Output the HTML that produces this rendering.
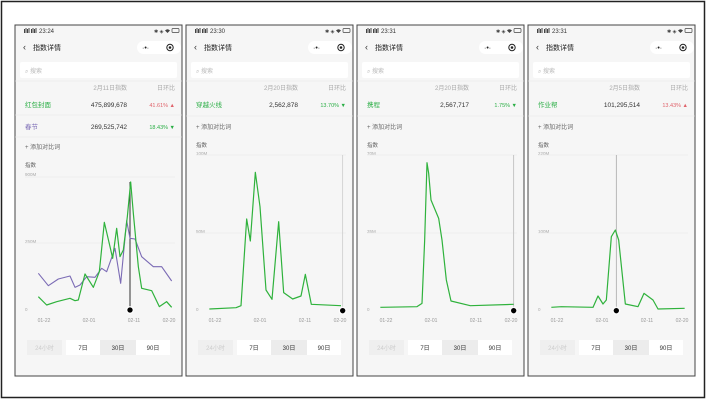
<!DOCTYPE html>
<html><head><meta charset="utf-8"><style>
html,body{margin:0;padding:0;background:#fff;width:706px;height:400px;overflow:hidden}
svg{display:block}
text{font-family:"Liberation Sans","Noto Sans CJK SC",sans-serif}
</style></head><body>
<svg width="706" height="400" viewBox="0 0 706 400" xmlns="http://www.w3.org/2000/svg">
<rect x="1.5" y="1.5" width="703" height="396" fill="#fff" stroke="#222" stroke-width="1.5"/>
<defs>
<g id="top">
  <rect x="0" y="0" width="167" height="351" fill="#f6f6f6" stroke="#444" stroke-width="1"/>
  <g fill="#444">
    <rect x="9" y="4" width="1" height="4"/><rect x="10.5" y="3" width="1" height="5"/><rect x="12" y="4" width="1" height="4"/><rect x="13.5" y="3" width="1" height="5"/>
    <rect x="16" y="4" width="1" height="4"/><rect x="17.5" y="3" width="1" height="5"/><rect x="19" y="4" width="1" height="4"/><rect x="20.5" y="3" width="1" height="5"/>
  </g>
  <text x="139" y="8" font-size="5" fill="#444">✱ ◈</text>
  <path d="M150,5.5 Q152.5,3 155,5.5 L152.5,8 Z" fill="#444"/>
  <rect x="157" y="3.5" width="7" height="4" rx="1" fill="none" stroke="#444" stroke-width="0.7"/>
  <text x="8" y="25" font-size="9" fill="#333">‹</text>
  <text x="18" y="25" font-size="7" fill="#222">指数详情</text>
  <rect x="122" y="16" width="44" height="13" rx="6.5" fill="#fff"/>
  <text x="127" y="25" font-size="7" fill="#222">·•·</text>
  <circle cx="155" cy="22.5" r="3.2" fill="none" stroke="#222" stroke-width="1"/>
  <circle cx="155" cy="22.5" r="1.3" fill="#222"/>
  <rect x="5" y="37" width="157" height="16" rx="2" fill="#fff"/>
  <text x="10" y="48" font-size="6" fill="#bbb">⌕ 搜索</text>
  <line x1="0" y1="56" x2="167" y2="56" stroke="#e8e8e8" stroke-width="0.6"/>
  <text x="160" y="65" font-size="6" fill="#aaa" text-anchor="end">日环比</text>
</g>
<g id="btns">
  <rect x="12" y="0" width="35" height="15" fill="#efefef"/>
  <text x="29.5" y="10" font-size="6" fill="#ccc" text-anchor="middle">24小时</text>
  <rect x="51" y="0" width="34" height="15" fill="#fff"/>
  <text x="68" y="10" font-size="6" fill="#333" text-anchor="middle">7日</text>
  <rect x="85" y="0" width="36" height="15" fill="#ececec"/>
  <text x="103" y="10" font-size="6" fill="#333" text-anchor="middle">30日</text>
  <rect x="121" y="0" width="34" height="15" fill="#fff"/>
  <text x="138" y="10" font-size="6" fill="#333" text-anchor="middle">90日</text>
</g>
<g id="xl">
  <text x="29" y="0" font-size="5" fill="#999" text-anchor="middle">01-22</text>
  <text x="74" y="0" font-size="5" fill="#999" text-anchor="middle">02-01</text>
  <text x="119" y="0" font-size="5" fill="#999" text-anchor="middle">02-11</text>
  <text x="154" y="0" font-size="5" fill="#999" text-anchor="middle">02-20</text>
</g>
</defs>

<!-- Panel 1 -->
<g transform="translate(15,25)">
  <use href="#top"/>
  <text x="24" y="8" font-size="6" fill="#333">23:24</text>
  <text x="112" y="65" font-size="6" fill="#aaa" text-anchor="end">2月11日指数</text>
  <text x="10" y="82" font-size="6.5" fill="#2aae45">红包封面</text>
  <text x="112" y="82" font-size="6.5" fill="#333" text-anchor="end">475,899,678</text>
  <text x="160" y="82" font-size="5.5" fill="#e0636b" text-anchor="end">41.61% ▲</text>
  <line x1="0" y1="90" x2="167" y2="90" stroke="#e8e8e8" stroke-width="0.6"/>
  <text x="10" y="104" font-size="6.5" fill="#7b6bb5">春节</text>
  <text x="112" y="104" font-size="6.5" fill="#333" text-anchor="end">269,525,742</text>
  <text x="160" y="104" font-size="5.5" fill="#2aae45" text-anchor="end">18.43% ▼</text>
  <line x1="0" y1="112" x2="167" y2="112" stroke="#e8e8e8" stroke-width="0.6"/>
  <text x="10" y="124" font-size="6" fill="#666">+ 添加对比词</text>
  <text x="10" y="142" font-size="5.5" fill="#666">指数</text>
  <text x="10" y="151" font-size="4.5" fill="#aaa">900M</text>
  <line x1="10" y1="152" x2="160" y2="152" stroke="#e6e6e6" stroke-width="0.5"/>
  <text x="10" y="218" font-size="4.5" fill="#aaa">250M</text>
  <line x1="10" y1="218" x2="160" y2="218" stroke="#e6e6e6" stroke-width="0.5"/>
  <text x="10" y="286" font-size="4.5" fill="#aaa">0</text>
  <use href="#xl" transform="translate(0,297)"/>
  <use href="#btns" transform="translate(0,315)"/>
</g>
<g transform="translate(0,200) scale(0.33333)" fill="none" stroke-linejoin="round">
  <line x1="390" y1="-54" x2="390" y2="330" stroke="#333" stroke-width="1" vector-effect="non-scaling-stroke"/>
  <path d="M115,220 L145,257 L175,237 L210,228 L225,262 L240,255 L260,230 L285,232 L305,205 L320,215 L345,145 L362,250 L380,62 L390,115 L405,117 L425,170 L460,200 L485,200 L515,243" stroke="#7b6bb5" stroke-width="1.1" vector-effect="non-scaling-stroke"/>
  <path d="M115,290 L140,315 L170,305 L210,295 L225,302 L235,300 L255,222 L280,262 L298,215 L313,67 L330,140 L338,175 L350,85 L360,170 L370,150 L382,50 L392,-54 L400,40 L415,200 L425,265 L455,272 L478,320 L500,305 L515,322" stroke="#2fb23c" stroke-width="1.2" vector-effect="non-scaling-stroke"/>
  <circle cx="390" cy="330" r="12" fill="#fff" opacity="0.8"/>
  <circle cx="390" cy="330" r="8" fill="#000"/>
</g>

<!-- Panel 2 -->
<g transform="translate(186,25)">
  <use href="#top"/>
  <text x="24" y="8" font-size="6" fill="#333">23:30</text>
  <text x="112" y="65" font-size="6" fill="#aaa" text-anchor="end">2月20日指数</text>
  <text x="10" y="82" font-size="6.5" fill="#2aae45">穿越火线</text>
  <text x="112" y="82" font-size="6.5" fill="#333" text-anchor="end">2,562,878</text>
  <text x="160" y="82" font-size="5.5" fill="#2aae45" text-anchor="end">13.70% ▼</text>
  <line x1="0" y1="91" x2="167" y2="91" stroke="#e8e8e8" stroke-width="0.6"/>
  <text x="10" y="104" font-size="6" fill="#666">+ 添加对比词</text>
  <text x="10" y="122" font-size="5.5" fill="#666">指数</text>
  <text x="10" y="130" font-size="4.5" fill="#aaa">100M</text>
  <line x1="10" y1="130" x2="160" y2="130" stroke="#e6e6e6" stroke-width="0.5"/>
  <text x="10" y="208" font-size="4.5" fill="#aaa">50M</text>
  <line x1="10" y1="208" x2="160" y2="208" stroke="#e6e6e6" stroke-width="0.5"/>
  <text x="10" y="286" font-size="4.5" fill="#aaa">0</text>
  <use href="#xl" transform="translate(0,297)"/>
  <use href="#btns" transform="translate(0,315)"/>
</g>
<g transform="translate(186,140) scale(0.33333)" fill="none" stroke-linejoin="round">
  <line x1="470" y1="45" x2="470" y2="510" stroke="#ccc" stroke-width="0.8" vector-effect="non-scaling-stroke"/>
  <path d="M70,507 L150,503 L165,497 L182,237 L193,303 L208,97 L222,200 L240,450 L258,478 L278,245 L293,458 L320,477 L345,468 L358,403 L376,493 L465,497" stroke="#2fb23c" stroke-width="1.2" vector-effect="non-scaling-stroke"/>
  <circle cx="470" cy="512" r="12" fill="#fff" opacity="0.8"/>
  <circle cx="470" cy="512" r="8" fill="#000"/>
</g>

<!-- Panel 3 -->
<g transform="translate(357,25)">
  <use href="#top"/>
  <text x="24" y="8" font-size="6" fill="#333">23:31</text>
  <text x="112" y="65" font-size="6" fill="#aaa" text-anchor="end">2月20日指数</text>
  <text x="10" y="82" font-size="6.5" fill="#2aae45">携程</text>
  <text x="112" y="82" font-size="6.5" fill="#333" text-anchor="end">2,567,717</text>
  <text x="160" y="82" font-size="5.5" fill="#2aae45" text-anchor="end">1.75% ▼</text>
  <line x1="0" y1="91" x2="167" y2="91" stroke="#e8e8e8" stroke-width="0.6"/>
  <text x="10" y="104" font-size="6" fill="#666">+ 添加对比词</text>
  <text x="10" y="122" font-size="5.5" fill="#666">指数</text>
  <text x="10" y="130" font-size="4.5" fill="#aaa">70M</text>
  <line x1="10" y1="130" x2="160" y2="130" stroke="#e6e6e6" stroke-width="0.5"/>
  <text x="10" y="208" font-size="4.5" fill="#aaa">35M</text>
  <line x1="10" y1="208" x2="160" y2="208" stroke="#e6e6e6" stroke-width="0.5"/>
  <text x="10" y="286" font-size="4.5" fill="#aaa">0</text>
  <use href="#xl" transform="translate(0,297)"/>
  <use href="#btns" transform="translate(0,315)"/>
</g>
<g transform="translate(357,140) scale(0.33333)" fill="none" stroke-linejoin="round">
  <line x1="470" y1="45" x2="470" y2="510" stroke="#bbb" stroke-width="0.8" vector-effect="non-scaling-stroke"/>
  <path d="M70,502 L180,500 L195,490 L203,300 L210,68 L215,100 L222,180 L245,235 L255,300 L268,420 L282,483 L340,497 L470,493" stroke="#2fb23c" stroke-width="1.2" vector-effect="non-scaling-stroke"/>
  <circle cx="470" cy="512" r="12" fill="#fff" opacity="0.8"/>
  <circle cx="470" cy="512" r="8" fill="#000"/>
</g>

<!-- Panel 4 -->
<g transform="translate(528,25)">
  <use href="#top"/>
  <text x="24" y="8" font-size="6" fill="#333">23:31</text>
  <text x="112" y="65" font-size="6" fill="#aaa" text-anchor="end">2月5日指数</text>
  <text x="10" y="82" font-size="6.5" fill="#2aae45">作业帮</text>
  <text x="112" y="82" font-size="6.5" fill="#333" text-anchor="end">101,295,514</text>
  <text x="160" y="82" font-size="5.5" fill="#e0636b" text-anchor="end">13.43% ▲</text>
  <line x1="0" y1="91" x2="167" y2="91" stroke="#e8e8e8" stroke-width="0.6"/>
  <text x="10" y="104" font-size="6" fill="#666">+ 添加对比词</text>
  <text x="10" y="122" font-size="5.5" fill="#666">指数</text>
  <text x="10" y="130" font-size="4.5" fill="#aaa">220M</text>
  <line x1="10" y1="130" x2="160" y2="130" stroke="#e6e6e6" stroke-width="0.5"/>
  <text x="10" y="208" font-size="4.5" fill="#aaa">100M</text>
  <line x1="10" y1="208" x2="160" y2="208" stroke="#e6e6e6" stroke-width="0.5"/>
  <text x="10" y="286" font-size="4.5" fill="#aaa">0</text>
  <use href="#xl" transform="translate(0,297)"/>
  <use href="#btns" transform="translate(0,315)"/>
</g>
<g transform="translate(528,140) scale(0.33333)" fill="none" stroke-linejoin="round">
  <line x1="265" y1="45" x2="265" y2="510" stroke="#aaa" stroke-width="0.8" vector-effect="non-scaling-stroke"/>
  <path d="M70,502 L100,500 L195,502 L210,468 L225,492 L235,480 L250,290 L262,270 L272,300 L292,492 L330,500 L348,460 L375,480 L390,507 L470,505" stroke="#2fb23c" stroke-width="1.2" vector-effect="non-scaling-stroke"/>
  <circle cx="265" cy="512" r="12" fill="#fff" opacity="0.8"/>
  <circle cx="265" cy="512" r="8" fill="#000"/>
</g>
</svg>
</body></html>
